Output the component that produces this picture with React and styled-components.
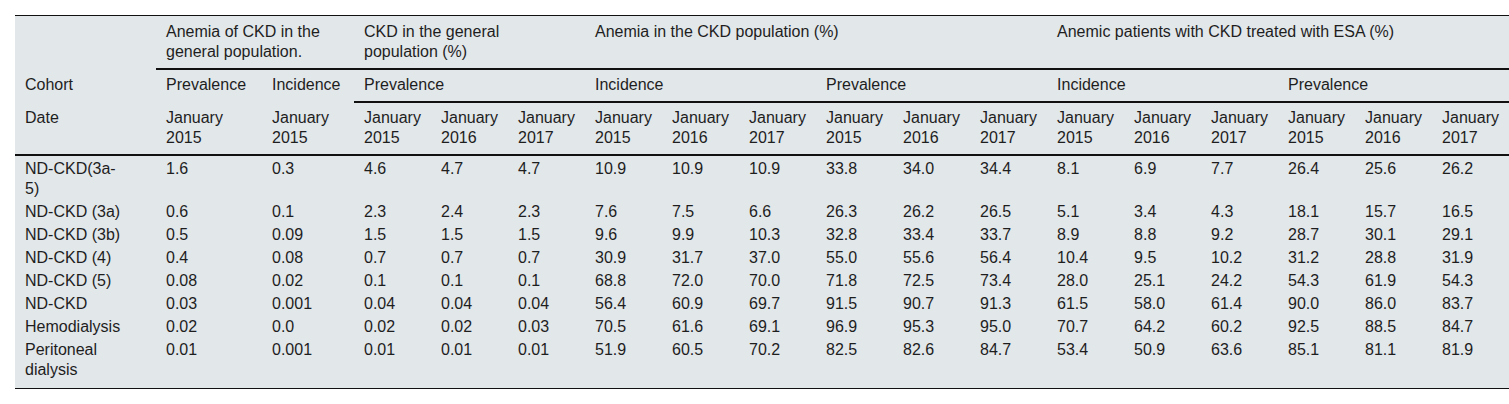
import React from "react";
import styled, { createGlobalStyle } from "styled-components";

const GlobalStyle = createGlobalStyle`
  html, body {
    margin: 0;
    padding: 0;
    background: #ffffff;
    overflow: hidden;
  }
`;

const Page = styled.div`
  padding: 15px 0 0 15px;
`;

const Table = styled.table`
  border-collapse: separate;
  border-spacing: 0;
  table-layout: fixed;
  width: 1494px;
  background: #e2e7ea;
  border-top: 1px solid #111;
  border-bottom: 1px solid #111;
  font-family: "Liberation Sans", Arial, sans-serif;
  font-size: 16px;
  line-height: 20px;
  color: #1e1e1e;
`;

const HeadCell = styled.th`
  text-align: left;
  font-weight: normal;
  vertical-align: top;
  padding: ${(p) => (p.$tight ? "5px" : "6px")} ${(p) => (p.$wide ? "14px" : "10px")} 6px 10px;
  border-bottom: ${(p) => (p.$rule ? "2px solid #111" : "none")};
`;

const BodyRow = styled.tr`
  &:last-child td {
    padding-bottom: 8px;
  }
`;

const Cell = styled.td`
  text-align: left;
  vertical-align: top;
  padding: 3px ${(p) => (p.$first ? "31px" : "10px")} 0 10px;
`;

const widths = [141, 106, 92, ...Array(15).fill(77)];

const groups = [
  { label: "Anemia of CKD in the general population.", span: 2 },
  { label: "CKD in the general population (%)", span: 3 },
  { label: "Anemia in the CKD population (%)", span: 6 },
  { label: "Anemic patients with CKD treated with ESA (%)", span: 6 },
];

const subs = [
  { label: "Prevalence", span: 1 },
  { label: "Incidence", span: 1 },
  { label: "Prevalence", span: 3 },
  { label: "Incidence", span: 3 },
  { label: "Prevalence", span: 3 },
  { label: "Incidence", span: 3 },
  { label: "Prevalence", span: 3 },
];

const years = ["2015", "2015", ...Array(5).fill(["2015", "2016", "2017"]).flat()];

const rows = [
  ["ND-CKD(3a-\u200B5)", "1.6", "0.3", "4.6", "4.7", "4.7", "10.9", "10.9", "10.9", "33.8", "34.0", "34.4", "8.1", "6.9", "7.7", "26.4", "25.6", "26.2"],
  ["ND-CKD (3a)", "0.6", "0.1", "2.3", "2.4", "2.3", "7.6", "7.5", "6.6", "26.3", "26.2", "26.5", "5.1", "3.4", "4.3", "18.1", "15.7", "16.5"],
  ["ND-CKD (3b)", "0.5", "0.09", "1.5", "1.5", "1.5", "9.6", "9.9", "10.3", "32.8", "33.4", "33.7", "8.9", "8.8", "9.2", "28.7", "30.1", "29.1"],
  ["ND-CKD (4)", "0.4", "0.08", "0.7", "0.7", "0.7", "30.9", "31.7", "37.0", "55.0", "55.6", "56.4", "10.4", "9.5", "10.2", "31.2", "28.8", "31.9"],
  ["ND-CKD (5)", "0.08", "0.02", "0.1", "0.1", "0.1", "68.8", "72.0", "70.0", "71.8", "72.5", "73.4", "28.0", "25.1", "24.2", "54.3", "61.9", "54.3"],
  ["ND-CKD", "0.03", "0.001", "0.04", "0.04", "0.04", "56.4", "60.9", "69.7", "91.5", "90.7", "91.3", "61.5", "58.0", "61.4", "90.0", "86.0", "83.7"],
  ["Hemodialysis", "0.02", "0.0", "0.02", "0.02", "0.03", "70.5", "61.6", "69.1", "96.9", "95.3", "95.0", "70.7", "64.2", "60.2", "92.5", "88.5", "84.7"],
  ["Peritoneal dialysis", "0.01", "0.001", "0.01", "0.01", "0.01", "51.9", "60.5", "70.2", "82.5", "82.6", "84.7", "53.4", "50.9", "63.6", "85.1", "81.1", "81.9"],
];

export default function App() {
  return (
    <Page>
      <GlobalStyle />
      <Table>
        <colgroup>
          {widths.map((w, i) => (
            <col key={i} style={{ width: w }} />
          ))}
        </colgroup>
        <thead>
          <tr>
            <HeadCell />
            {groups.map((g, i) => (
              <HeadCell key={i} colSpan={g.span} $rule $wide>
                {g.label}
              </HeadCell>
            ))}
          </tr>
          <tr>
            <HeadCell $tight>Cohort</HeadCell>
            {subs.map((s, i) => (
              <HeadCell key={i} colSpan={s.span} $tight $rule={s.span > 1}>
                {s.label}
              </HeadCell>
            ))}
          </tr>
          <tr>
            <HeadCell $tight $rule>
              Date
            </HeadCell>
            {years.map((y, i) => (
              <HeadCell key={i} $tight $rule>
                January {y}
              </HeadCell>
            ))}
          </tr>
        </thead>
        <tbody>
          {rows.map((r, ri) => (
            <BodyRow key={ri}>
              {r.map((c, ci) => (
                <Cell key={ci} $first={ci === 0}>
                  {c}
                </Cell>
              ))}
            </BodyRow>
          ))}
        </tbody>
      </Table>
    </Page>
  );
}
